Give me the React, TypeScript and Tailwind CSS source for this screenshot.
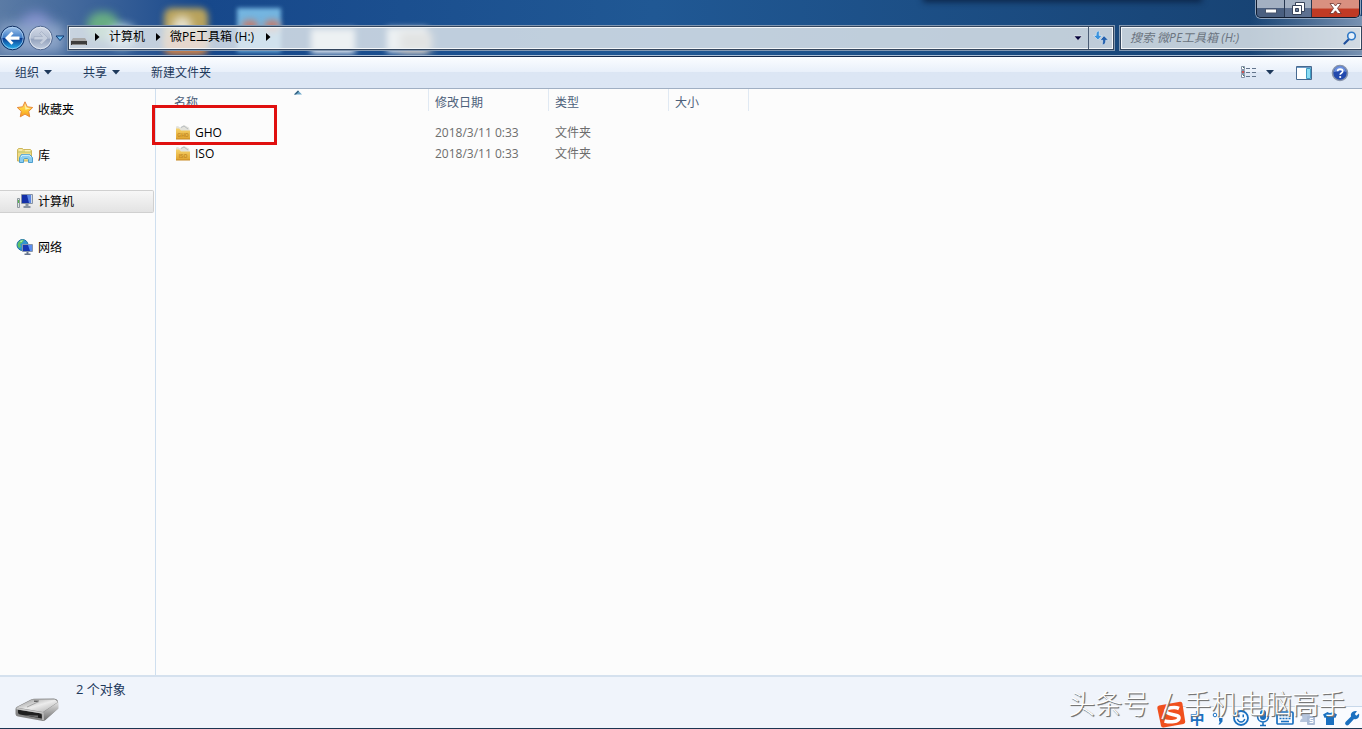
import type { ReactNode } from "react";

const sidebarItems: { label: string; icon: ReactNode; selected?: boolean }[] = [
  { label: "收藏夹", icon: <StarIcon /> },
  { label: "库", icon: <LibraryIcon /> },
  { label: "计算机", icon: <ComputerIcon />, selected: true },
  { label: "网络", icon: <NetworkIcon /> },
];

const files = [
  { name: "GHO", date: "2018/3/11 0:33", type: "文件夹" },
  { name: "ISO", date: "2018/3/11 0:33", type: "文件夹" },
];

function StarIcon() {
  return (
    <svg width="18" height="18" viewBox="0 1 18 18" aria-hidden="true">
      <defs>
        <linearGradient id="star" x1="0" y1="0" x2="0" y2="1">
          <stop offset="0" stopColor="#ffc98a" />
          <stop offset="0.45" stopColor="#ffd23c" />
          <stop offset="1" stopColor="#f79a1c" />
        </linearGradient>
      </defs>
      <path d="M9 1.800l2.300 5 5.400.7-4 3.800 1 5.500L9 14.100l-4.700 2.700 1-5.500-4-3.800 5.400-.7z" fill="url(#star)" stroke="#e88a3a" strokeLinejoin="round" />
      <path d="M9 4l1.600 3.600 3.800.6-5 1.500z" fill="#fff3a8" />
    </svg>
  );
}

function LibraryIcon() {
  return (
    <svg width="18" height="18" viewBox="0 1 18 18" aria-hidden="true">
      <path d="M1.500 15V3.500l1-1h4l1 1h7l1 1V15z" fill="#f0dc85" stroke="#cdb75e" />
      <path d="M2 6h13" stroke="#b9c46c" />
      <path d="M3 4h3M9 4.800h5" stroke="#fff8cf" />
      <path d="M3.500 16.500v-5l2-3h8l3 3v5h-4v-2.800l-1-1.200h-3l-1 1.200v2.800z" fill="#8ccdf0" stroke="#4d9fce" />
      <path d="M5 11l1.200-1.700h6.600L15 11" fill="none" stroke="#d8f2ff" />
    </svg>
  );
}

function ComputerIcon() {
  return (
    <svg width="18" height="18" viewBox="0 1 18 18" aria-hidden="true">
      <path d="M1.500 6.500h2v9h-2z" fill="#dde3e6" stroke="#8d979c" />
      <path d="M2 8h1v3H2z" fill="#54b84c" />
      <path d="M5.500 2.500h11v9h-11z" fill="#d3dbe6" stroke="#8793a5" />
      <path d="M6 3h9v8H6z" fill="#1430a8" />
      <path d="M11 3h4v8h-2z" fill="#5a86e4" />
      <path d="M9.500 12h3v2h2v2h-7v-2h2z" fill="#8994a2" />
    </svg>
  );
}

function NetworkIcon() {
  return (
    <svg width="18" height="18" viewBox="0 1 18 18" aria-hidden="true">
      <circle cx="6.500" cy="7" r="5.500" fill="#3295cf" stroke="#2173a5" />
      <path d="M2 5c2-3 4-3.500 6-3l-2 3-2 1 1 3-2 1c-1-1-2-3-1-5z" fill="#5fc464" />
      <path d="M4 3l3-.7-2 2z" fill="#c8f2c5" />
      <path d="M6.500 6.500h10v7h-10z" fill="#dbe5f0" stroke="#8695aa" />
      <path d="M7 7h9v6H7z" fill="#1737b3" />
      <path d="M12 7h4v6h-2z" fill="#5c8ff0" />
      <path d="M10.500 14h2v1.500h2V17h-6v-1.500h2z" fill="#66758c" />
    </svg>
  );
}

function FolderIcon({ label }: { label: string }) {
  return (
    <svg width="16" height="16" viewBox="0 1 16 16" aria-hidden="true">
      <defs>
        <linearGradient id="folder" x1="0" y1="0" x2="0" y2="1">
          <stop offset="0" stopColor="#f6d26a" />
          <stop offset="1" stopColor="#e0a42f" />
        </linearGradient>
      </defs>
      <path d="M1 2.500L3 2l2 1.500L9 1l5 2.500L15 8H1z" fill="#e2e2dc" />
      <path d="M6 3.500l3-1.500 4 3" fill="none" stroke="#b7bcc0" />
      <path d="M1 4.500h3l2 2h9V15H1z" fill="url(#folder)" />
      <path d="M1 15h14" stroke="#c88a25" />
      <text x="8" y="13" textAnchor="middle" fontSize="5" fontWeight="700" fill="#c48a24" className="font-['Liberation_Sans',sans-serif]">{label}</text>
    </svg>
  );
}

function NavButtons() {
  return (
    <div className="flex shrink-0 items-center">
      <button type="button" aria-label="后退" className="block">
        <svg width="26" height="26" viewBox="0 0 26 26" aria-hidden="true">
          <defs>
            <linearGradient id="back" x1="0" y1="0" x2="0" y2="1">
              <stop offset="0" stopColor="#a8c8ec" />
              <stop offset="0.48" stopColor="#3f7dc8" />
              <stop offset="0.52" stopColor="#0a3c92" />
              <stop offset="1" stopColor="#27b8f4" />
            </linearGradient>
          </defs>
          <circle cx="12.500" cy="13" r="11.800" fill="url(#back)" stroke="#0d2c60" />
          <circle cx="12.500" cy="13" r="10.700" fill="none" stroke="#b5d4f2" strokeOpacity=".7" />
          <path d="M5 13l6.500-6.500 2 2-3 3H19.500v3.200h-9l3 3-2 2z" fill="#fff" />
        </svg>
      </button>
      <button type="button" aria-label="前进" className="ml-[2px] block">
        <svg width="26" height="26" viewBox="0 0 26 26" aria-hidden="true">
          <defs>
            <linearGradient id="forward" x1="0" y1="0" x2="0" y2="1">
              <stop offset="0" stopColor="#d2d9e7" />
              <stop offset="0.5" stopColor="#b4bfd2" />
              <stop offset="0.55" stopColor="#94a3be" />
              <stop offset="1" stopColor="#c4cfe0" />
            </linearGradient>
          </defs>
          <circle cx="12.500" cy="13" r="11.800" fill="url(#forward)" stroke="#50678f" />
          <circle cx="12.500" cy="13" r="10.700" fill="none" stroke="#e6ecf5" strokeOpacity=".8" />
          <path d="M20 13l-6.500-6.500-2 2 3 3H6v3.200h8.500l-3 3 2 2z" fill="#c5cedd" stroke="#9daac0" strokeWidth=".6" />
        </svg>
      </button>
      <button type="button" aria-label="最近的位置" className="flex w-3 justify-center">
        <svg width="10" height="7" viewBox="0 0 10 7" aria-hidden="true">
          <path d="M1 1h8L5 5.500z" fill="#6dbbf0" stroke="#0d3b74" />
        </svg>
      </button>
    </div>
  );
}

function Crumb() {
  return (
    <svg width="5" height="8" viewBox="0 0 5 8" className="shrink-0" aria-hidden="true">
      <path d="M0 0l4.500 4L0 8z" fill="#000" />
    </svg>
  );
}

function DownArrow() {
  return (
    <svg width="8" height="5" viewBox="0 0 8 5" className="shrink-0" aria-hidden="true">
      <path d="M0 0h8L4 4.500z" fill="#1e395b" />
    </svg>
  );
}

function WindowControls() {
  return (
    <div className="flex h-[18px] w-[104px] overflow-hidden rounded-b-[5px] border border-t-0 border-[#101c30] shadow-[0_0_0_1px_#8fa3bd]">
      <button type="button" aria-label="最小化" className="flex w-7 items-center justify-center border-r border-[#26364f] bg-linear-to-b from-[#a3b0c2] from-45% to-[#4a5f80] to-50%">
        <svg width="12" height="6" viewBox="0 0 12 6" className="mt-1" aria-hidden="true">
          <path d="M.5 1h11v4H.5z" fill="#fff" stroke="#48556c" />
        </svg>
      </button>
      <button type="button" aria-label="还原" className="flex w-[27px] items-center justify-center border-r border-[#26364f] bg-linear-to-b from-[#a3b0c2] from-45% to-[#5d7090] to-50%">
        <svg width="13" height="13" viewBox="0 0 13 13" aria-hidden="true">
          <path d="M3.500.5h9v9h-9z" fill="#fff" stroke="#38445a" />
          <path d="M.5 3.500h9v9h-9z" fill="#fff" stroke="#38445a" />
          <path d="M3.500 6.500h3v3h-3z" fill="#6a7c99" stroke="#38445a" />
        </svg>
      </button>
      <button type="button" aria-label="关闭" className="flex flex-1 items-center justify-center bg-linear-to-b from-[#d99080] from-45% to-[#c03a24] to-55%">
        <svg width="13" height="11" viewBox="0 0 13 11" aria-hidden="true">
          <path d="M1 .5h3.500l2 2.500 2-2.500H12L8.500 5.300l3.700 5.200H8.700L6.500 7.800l-2.200 2.700H.8l3.700-5.200z" fill="#fff" stroke="#6a342f" strokeWidth=".8" />
        </svg>
      </button>
    </div>
  );
}

function Header() {
  return (
    <header className="relative h-[57px] shrink-0 overflow-hidden border-b border-[#14294b] bg-[#1d528f]">
      <div className="absolute inset-0 bg-linear-to-r from-[#5b7ba5] to-[#17488b] to-15%" />
      <div className="absolute inset-0 bg-linear-to-r from-transparent from-15% via-[#205894] via-48% to-[#16406f]" />
      <div className="absolute right-0 bottom-0 h-10 w-28 bg-linear-to-r from-transparent to-[#7892b2]" />
      <div className="absolute top-3 left-5 h-9 w-8 rounded-full bg-[#8290cd] blur-[6px]" />
      <div className="absolute top-6 left-0 h-7 w-16 bg-[#8ba3c6] blur-[6px]" />
      <div className="absolute top-3 left-[87px] h-7 w-8 rounded-full bg-[#68ad83] blur-[4px]" />
      <div className="absolute top-6 left-[108px] h-6 w-7 rounded-full bg-[#b9d6e2] blur-[4px]" />
      <div className="absolute top-2 left-[164px] h-11 w-11 rounded-lg bg-[#b9a35c] blur-[3px]" />
      <div className="absolute top-4 left-[172px] h-5 w-5 rounded-full bg-[#e6e0cc] blur-[4px]" />
      <div className="absolute top-[34px] left-[166px] h-5 w-10 bg-[#d97c45] blur-[4px]" />
      <div className="absolute top-2 left-[237px] h-11 w-11 bg-[#74b5e0] blur-[2px]" />
      <div className="absolute top-5 left-[242px] h-3 w-4 rounded-full bg-[#c07f73] blur-[3px]" />
      <div className="absolute top-5 left-[264px] h-3 w-4 rounded-full bg-[#c07f73] blur-[3px]" />
      <div className="absolute top-[29px] left-[311px] h-6 w-11 bg-white blur-[3px]" />
      <div className="absolute top-7 left-[387px] h-6 w-10 bg-white blur-[3px]" />
      <div className="absolute top-8 left-[400px] h-5 w-8 bg-[#c5b9ae] blur-[4px]" />
      <div className="absolute -top-1 left-[925px] h-1 w-[275px] shadow-[0_0_6px_2px_#0b2447]" />
      <div className="absolute inset-x-0 bottom-0 h-px bg-[#a9bdd4]" />

      <div className="relative flex h-[26px] justify-end pr-[2px]">
        <WindowControls />
      </div>
      <div className="relative flex h-6 items-center">
        <NavButtons />
        <nav aria-label="地址" className="ml-[2px] flex h-6 min-w-0 flex-1 items-stretch border border-[#34465e] bg-[#e9edf0]/80 shadow-[inset_0_0_0_1px_#f3f6f9,0_0_0_1px_#8197b1]">
          <div className="flex flex-1 items-center pb-[2px]">
            <svg width="18" height="8" viewBox="0 0 18 8" className="mt-[9px] ml-px" aria-hidden="true">
              <path d="M3 0h12l2 3H1z" fill="#aaa" />
              <path d="M1 3h16v4H1z" fill="#3d3d3d" />
              <path d="M2 6.500h14" stroke="#8a8a8a" />
            </svg>
            <span className="ml-[7px] flex"><Crumb /></span>
            <button type="button" className="ml-[9px]">计算机</button>
            <span className="ml-[11px] flex"><Crumb /></span>
            <button type="button" className="ml-[9px]">微PE工具箱 (H:)</button>
            <span className="ml-[12px] flex"><Crumb /></span>
          </div>
          <button type="button" aria-label="以前的位置" className="flex w-5 items-center justify-center">
            <svg width="10" height="7" viewBox="0 0 10 7" aria-hidden="true">
              <path d="M1 1h8L5 5.500z" fill="#03033c" stroke="#fff" strokeWidth=".5" />
            </svg>
          </button>
          <button type="button" aria-label="刷新" className="flex w-[25px] items-center justify-center border-l border-[#4a5c75]">
            <svg width="16" height="14" viewBox="0 0 16 14" aria-hidden="true">
              <path d="M6.500 0C3.500 0 3.200 2 3.200 4.500H.5L5 9l4-4.500H6.200C6.200 3 6 1.500 6.500 0z" fill="#3a92dc" stroke="#f4faff" strokeWidth=".5" />
              <path d="M9 13.800c3.300 0 3.700-2 3.700-4.600h2.800L11 4.800 7 9.200h2.700c0 1.800 0 3-.7 4.600z" fill="#2460ad" stroke="#f4faff" strokeWidth=".5" />
            </svg>
          </button>
        </nav>
        <label className="ml-[6px] flex h-6 w-[242px] shrink-0 items-center border border-[#34465e] bg-[#e9edf0]/80 pr-1 pl-[9px] shadow-[inset_0_0_0_1px_#f3f6f9,0_0_0_1px_#8197b1]">
          <input type="search" aria-label="搜索" placeholder="搜索 微PE工具箱 (H:)" className="min-w-0 flex-1 bg-transparent italic outline-none placeholder:text-[#6b7480]" />
          <svg width="14" height="14" viewBox="0 0 14 14" aria-hidden="true">
            <path d="M6 8l-4.500 4.500" stroke="#1f4f9c" strokeWidth="2.200" strokeLinecap="round" />
            <circle cx="8.500" cy="5" r="3.800" fill="#e6f1fb" stroke="#2f79c6" strokeWidth="1.600" />
          </svg>
        </label>
      </div>
    </header>
  );
}

function Toolbar() {
  return (
    <div role="toolbar" aria-label="工具栏" className="flex h-8 shrink-0 items-center border-b border-[#a0afc3] bg-linear-to-b from-[#fbfdff] via-[#e9f0fa] via-47% to-[#dce6f4] to-50% pr-[13px] pl-[15px] text-[#1e395b]">
      <button type="button" className="flex items-center gap-[5px]">组织 <DownArrow /></button>
      <button type="button" className="ml-[31px] flex items-center gap-[5px]">共享 <DownArrow /></button>
      <button type="button" className="ml-[31px]">新建文件夹</button>
      <div className="ml-auto flex items-center">
        <button type="button" aria-label="更改视图" className="block">
          <svg width="16" height="13" viewBox="0 0 16 13" aria-hidden="true">
            <path d="M.500.500h3v3h-3zM.500 4.500h3v3h-3zM.500 8.500h3v3h-3z" fill="#fff" stroke="#8290a5" />
            <path d="M2 1h1v1H2zM2 9h1v1H2z" fill="#476" />
            <path d="M1 5h2v2H1z" fill="#c55" />
            <path d="M5 2.500h4M11 2.500h4M5 6.500h4M11 6.500h4M5 10.500h4M11 10.500h4" stroke="#62748c" />
          </svg>
        </button>
        <button type="button" aria-label="更多选项" className="ml-[9px] flex"><DownArrow /></button>
        <button type="button" aria-label="显示预览窗格" className="ml-[22px] block">
          <svg width="16" height="14" viewBox="0 0 16 14" aria-hidden="true">
            <path d="M.5.5h15v13H.5z" fill="#fff" stroke="#476990" />
            <path d="M1 1.500h14" stroke="#6b9ac5" />
            <path d="M10.500 2.500h4v10h-4z" fill="#8bdcf3" stroke="#3d9bc3" />
          </svg>
        </button>
        <button type="button" aria-label="获取帮助" className="ml-[19px] block">
          <svg width="18" height="18" viewBox="0 0 18 18" aria-hidden="true">
            <circle cx="9" cy="9" r="7.500" fill="#2249ad" stroke="#8693aa" strokeWidth="1.600" />
            <path d="M3 8a6 6 0 0112 0c-3-1.500-8-1-12 0z" fill="#6c90de" />
            <path d="M6.600 7.200c0-2.900 5.100-2.900 5.100 0 0 1.800-2.500 1.800-2.500 3.600" fill="none" stroke="#fff" strokeWidth="1.700" />
            <circle cx="9.200" cy="13" r="1.100" fill="#fff" />
          </svg>
        </button>
      </div>
    </div>
  );
}

function Sidebar() {
  return (
    <nav aria-label="导航窗格" className="w-[156px] shrink-0 border-r border-[#cfdfef] pt-[9px] pr-px">
      <ul className="flex flex-col gap-[23px]">
        {sidebarItems.map((item) => (
          <li key={item.label}>
            <a
              href="#"
              className={
                item.selected
                  ? "flex h-[23px] items-center gap-1 rounded-r-[2px] border border-l-0 border-[#d0d0d0] bg-linear-to-b from-[#f7f7f7] to-[#e3e3e3] pl-4 text-black"
                  : "flex h-[23px] items-center gap-1 pl-4 text-black"
              }
            >
              {item.icon}
              {item.label}
            </a>
          </li>
        ))}
      </ul>
    </nav>
  );
}

function FileList() {
  return (
    <main className="relative min-w-0 flex-1">
      <table className="w-full table-fixed border-collapse text-left">
        <colgroup>
          <col className="w-[273px]" />
          <col className="w-[120px]" />
          <col className="w-[120px]" />
          <col className="w-[80px]" />
          <col />
        </colgroup>
        <thead className="text-[#4c607a]">
          <tr>
            <th className="p-0 pb-[11px] font-normal">
              <div className="relative flex h-[22px] items-end border-r border-[#e0e9f3] pl-[18px]">
                名称
                <svg width="8" height="5" viewBox="0 0 8 5" className="absolute top-px left-[138px]" aria-hidden="true">
                  <path d="M0 4.500L4 .5l4 4z" fill="#6aa5c8" />
                  <path d="M0 4.500L4 .5l1 1-3 3z" fill="#35607f" />
                </svg>
              </div>
            </th>
            <th className="p-0 pb-[11px] font-normal"><div className="flex h-[22px] items-end border-r border-[#e0e9f3] pl-[6px]">修改日期</div></th>
            <th className="p-0 pb-[11px] font-normal"><div className="flex h-[22px] items-end border-r border-[#e0e9f3] pl-[6px]">类型</div></th>
            <th className="p-0 pb-[11px] font-normal"><div className="flex h-[22px] items-end border-r border-[#e0e9f3] pl-[6px]">大小</div></th>
            <td />
          </tr>
        </thead>
        <tbody>
          {files.map((file) => (
            <tr key={file.name} className="h-[21px] text-[#6d6d6d]">
              <td className="p-0 pl-[19px]">
                <span className="flex items-center gap-1 text-black"><FolderIcon label={file.name} />{file.name}</span>
              </td>
              <td className="p-0 pl-[6px]">{file.date}</td>
              <td className="p-0 pl-[6px]">{file.type}</td>
              <td />
              <td />
            </tr>
          ))}
        </tbody>
      </table>
      <div className="pointer-events-none absolute top-4 -left-1 h-10 w-[125px] border-3 border-[#e0100f]" />
    </main>
  );
}

function InputBar() {
  return (
    <div className="absolute right-0 bottom-0 flex h-[26px] items-end">
      <svg width="30" height="27" viewBox="0 0 30 27" className="relative z-10" aria-hidden="true">
        <path d="M3 4.500L24 .8q2-.3 2.400 1.700l2.800 18q.3 2-1.700 2.400L7.500 26.500q-2 .3-2.500-1.700L1.300 7q-.3-2 1.700-2.500z" fill="#f0501e" />
        <path d="M23 7.500c-4-1.800-13-.8-13 2.500 0 4.300 13.500 2.500 13 7-.4 4-8.500 4.500-14.500 3" fill="none" stroke="#fff" strokeWidth="3.600" />
      </svg>
      <div className="-ml-3 flex h-[22px] items-center border-t border-[#c8d8ea] bg-[#f9fbff] pl-3 text-[#1b70c0]">
        <button type="button" className="ml-[2px] w-[18px] text-[15px] font-bold">中</button>
        <svg width="12" height="16" viewBox="0 0 12 16" className="ml-[6px]" aria-hidden="true">
          <circle cx="3" cy="5" r="1.800" fill="none" stroke="currentColor" />
          <path d="M7 8h3.500v3.500L8 14.500H6.500L8 11.500H7z" fill="currentColor" />
        </svg>
        <svg width="18" height="18" viewBox="0 0 18 18" className="ml-2" aria-hidden="true">
          <circle cx="9" cy="9" r="7" fill="none" stroke="currentColor" strokeWidth="1.800" />
          <path d="M5.300 10c1.500 4 6 4 7.500 0" fill="none" stroke="currentColor" strokeWidth="1.400" />
          <path d="M6 5.500h1.600v2.700H6zM10.500 5.500H12v2.700h-1.500z" fill="currentColor" />
        </svg>
        <svg width="16" height="18" viewBox="0 0 16 18" className="ml-[5px]" aria-hidden="true">
          <rect x="5" y="1" width="6" height="10" rx="3" fill="currentColor" />
          <path d="M2.500 7c0 8 11 8 11 0M8 13v3M5 16.500h6" fill="none" stroke="currentColor" strokeWidth="1.600" />
        </svg>
        <svg width="18" height="14" viewBox="0 0 18 14" className="ml-[5px]" aria-hidden="true">
          <rect x="1" y="1" width="16" height="12" rx="1" fill="none" stroke="currentColor" strokeWidth="1.700" />
          <path d="M3.500 4.500h11M3.500 7.500h11" stroke="currentColor" strokeWidth="1.600" strokeDasharray="2 1" />
          <path d="M5 10.500h8" stroke="currentColor" strokeWidth="1.600" />
        </svg>
        <svg width="16" height="14" viewBox="0 0 16 14" className="ml-[6px]" aria-hidden="true">
          <circle cx="6" cy="5" r="4" fill="#b6c5dd" />
          <path d="M0 11q0-4 5-4h3v4z" fill="#b6c5dd" />
          <rect x="7" y="5" width="8" height="9" rx="1" fill="#aabbd6" />
          <path d="M13 7.500h-3v2h3v2h-3.500" fill="none" stroke="#fff" />
        </svg>
        <svg width="14" height="16" viewBox="0 0 14 16" className="ml-[7px]" aria-hidden="true">
          <path d="M4.500 2q2.500 2 5 0L14 4.500 12.300 8 11 7.500V15H3V7.500L1.700 8 0 4.500z" fill="currentColor" />
        </svg>
        <svg width="16" height="16" viewBox="0 0 16 16" className="mr-[2px] ml-[7px]" aria-hidden="true">
          <path d="M10 1.200q1.500-.6 3 0L10.800 4l1.500 1.700L15 3.500c1 4-2 6.500-5 5.500l-5.500 6q-1.500 1-2.800-.2Q.5 13.500 1.500 12L7 6.500C6.300 4 7.500 2 10 1.200z" fill="currentColor" />
        </svg>
      </div>
    </div>
  );
}

function DetailsPane() {
  return (
    <footer className="relative flex h-[54px] shrink-0 border-t-2 border-b border-t-[#d5e1ee] border-b-[#1c3551] bg-[#f0f4fb] text-[#1e395b]">
      <svg width="46" height="26" viewBox="0 0 46 26" className="mt-5 ml-[14px]" aria-hidden="true">
        <defs>
          <linearGradient id="driveTop" x1="0" y1="0" x2="1" y2="1">
            <stop offset="0" stopColor="#8f8f8f" />
            <stop offset="0.5" stopColor="#ececec" />
            <stop offset="1" stopColor="#aaaaaa" />
          </linearGradient>
          <linearGradient id="driveSide" x1="0" y1="0" x2="0" y2="1">
            <stop offset="0" stopColor="#e4e4e4" />
            <stop offset="1" stopColor="#6f6f6f" />
          </linearGradient>
        </defs>
        <path d="M1.500 12q0-1.500 1.500-2.300L17 2.500q1.500-.8 3-.8l20-.2q3 0 4 2.500v7.500L31.500 23q-1.500 1.300-4 .8L4 19.500q-2.500-.5-2.500-2.500z" fill="#858585" />
        <path d="M2.500 10.500L18 2.500h23l3 2.500-15 10z" fill="url(#driveTop)" />
        <path d="M29.500 15l15-10v6.500L30.500 23.500z" fill="url(#driveSide)" />
        <path d="M4 12.800l22 3.500q1.800.5 1.800 2.200v3L6 17.500q-2-.5-2-2z" fill="#1f1f1f" />
        <path d="M2.500 11.500L29 16V23" fill="none" stroke="#c9c9c9" strokeWidth="1.300" />
        <path d="M20 3.500h5l-1 1.500h-4z" fill="#666" />
        <path d="M13 10L25 4.500" stroke="#a4a4a4" />
        <path d="M10 18l14 2.600v-2z" fill="#6b6b6b" />
      </svg>
      <p className="mt-[2px] ml-4 text-[13px] leading-5">2 个对象</p>
      <InputBar />
      <p className="pointer-events-none absolute right-4 bottom-[7px] z-20 flex gap-3 font-['Noto_Sans_CJK_SC',sans-serif] text-[27px] leading-9 font-light whitespace-nowrap text-white [text-shadow:1px_1px_0_#777,1px_1px_1px_#666]">
        <span>头条号</span>
        <span>/</span>
        <span>手机电脑高手</span>
      </p>
    </footer>
  );
}

export default function App() {
  return (
    <div className="flex min-h-screen flex-col bg-[#fcfcfc] font-['Open_Sans','Noto_Sans_CJK_SC',sans-serif] text-[12px] leading-4 text-black">
      <Header />
      <Toolbar />
      <div className="flex flex-1">
        <Sidebar />
        <FileList />
      </div>
      <DetailsPane />
    </div>
  );
}
